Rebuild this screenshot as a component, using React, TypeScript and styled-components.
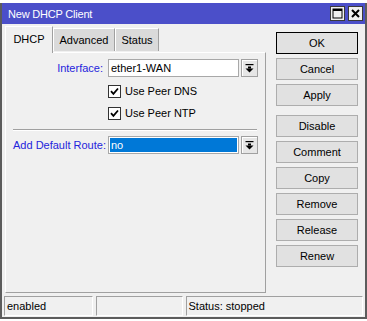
import React from "react";
import styled, { createGlobalStyle } from "styled-components";

const Global = createGlobalStyle`
  html, body { margin: 0; padding: 0; background: #ffffff; }
  body { font-family: "Liberation Sans", Arial, sans-serif; font-size: 11px; color: #000; }
`;

const Desktop = styled.div`
  width: 367px;
  height: 321px;
  box-sizing: border-box;
  padding-top: 3px;
  background: #ffffff;
  overflow: hidden;
`;

const Window = styled.div`
  width: 367px;
  height: 316px;
  box-sizing: border-box;
  border: 2px solid #5c5c5c;
  border-top: none;
  background: #f0f0f0;
  display: flex;
  flex-direction: column;
`;

const TitleBar = styled.div`
  height: 21px;
  flex: none;
  background: #4b4fc9;
  color: #ffffff;
  display: flex;
  align-items: center;
  padding: 0 2px 0 6px;
  font-size: 11px;
  letter-spacing: -0.2px;
`;

const TitleText = styled.div`
  flex: 1;
`;

const TitleButtons = styled.div`
  display: flex;
  gap: 3px;
`;

const TitleButton = styled.div`
  width: 15px;
  height: 15px;
  box-sizing: border-box;
  border: 1px solid #3a3a3a;
  background: #f0f0f0;
  display: flex;
  align-items: center;
  justify-content: center;
`;

const Body = styled.div`
  flex: 1;
  display: flex;
  padding: 2px 0 0 3px;
  min-height: 0;
`;

const MainCol = styled.div`
  width: 261px;
  display: flex;
  flex-direction: column;
`;

const TabRow = styled.div`
  height: 27px;
  display: flex;
  align-items: flex-start;
  position: relative;
  z-index: 1;
`;

const Tab = styled.div<{ $active?: boolean; $w: number }>`
  width: ${(p) => p.$w}px;
  height: ${(p) => (p.$active ? 27 : 23)}px;
  margin-top: ${(p) => (p.$active ? 0 : 2)}px;
  box-sizing: border-box;
  background: ${(p) => (p.$active ? "#f0f0f0" : "#dadada")};
  border-top: 1px solid #ffffff;
  border-left: 1px solid #ffffff;
  border-right: 1px solid #a0a0a0;
  display: flex;
  align-items: center;
  justify-content: center;
  padding-bottom: ${(p) => (p.$active ? 2 : 0)}px;
`;

const Panel = styled.div`
  height: 241px;
  margin-top: -1px;
  box-sizing: border-box;
  border: 1px solid;
  border-color: #ffffff #a0a0a0 #a0a0a0 #ffffff;
  padding: 6px 0 0 7px;
  display: flex;
  flex-direction: column;
`;

const FieldRow = styled.div<{ $top?: number }>`
  display: flex;
  align-items: center;
  height: 18px;
  margin-top: ${(p) => p.$top ?? 0}px;
`;

const Label = styled.div`
  width: 90px;
  text-align: right;
  color: #2424dc;
  padding-right: 5px;
  white-space: nowrap;
`;

const Input = styled.div<{ $selected?: boolean }>`
  width: 131px;
  height: 18px;
  box-sizing: border-box;
  border: 1px solid #a8a8a8;
  background: #ffffff;
  padding: 1px;
  display: flex;
`;

const InputInner = styled.div<{ $selected?: boolean }>`
  flex: 1;
  background: ${(p) => (p.$selected ? "#0078d7" : "#ffffff")};
  color: ${(p) => (p.$selected ? "#ffffff" : "#000000")};
  display: flex;
  align-items: center;
  padding-left: 1px;
`;

const DropButton = styled.div`
  width: 17px;
  height: 18px;
  margin-left: 2px;
  box-sizing: border-box;
  border: 1px solid #a0a0a0;
  box-shadow: inset 1px 1px 0 #ffffff;
  background: #e6e6e6;
  display: flex;
  align-items: center;
  justify-content: center;
`;

const CheckRow = styled.div<{ $top?: number }>`
  display: flex;
  align-items: center;
  height: 22px;
  margin-top: ${(p) => p.$top ?? 0}px;
  padding-left: 95px;
  gap: 4px;
`;

const Box = styled.div`
  width: 13px;
  height: 13px;
  box-sizing: border-box;
  border: 1px solid #333333;
  background: #ffffff;
  display: flex;
  align-items: center;
  justify-content: center;
`;

const Separator = styled.div`
  width: 244px;
  height: 1px;
  margin-top: 5px;
  background: #a0a0a0;
  box-shadow: 0 1px 0 #ffffff;
`;

const ButtonCol = styled.div`
  width: 82px;
  margin-left: 10px;
  padding-top: 6px;
  display: flex;
  flex-direction: column;
  gap: 4px;
`;

const Button = styled.div<{ $default?: boolean; $spaced?: boolean }>`
  height: 22px;
  box-sizing: border-box;
  border: 1px solid ${(p) => (p.$default ? "#000000" : "#adadad")};
  background: #e1e1e1;
  display: flex;
  align-items: center;
  justify-content: center;
  margin-top: ${(p) => (p.$spaced ? 5 : 0)}px;
`;

const StatusBar = styled.div`
  height: 20px;
  flex: none;
  margin: 3px 2px 1px 2px;
  display: flex;
  gap: 3px;
`;

const StatusCell = styled.div<{ $w: number }>`
  width: ${(p) => p.$w}px;
  box-sizing: border-box;
  border: 1px solid;
  border-color: #a0a0a0 #ffffff #ffffff #a0a0a0;
  display: flex;
  align-items: center;
  padding-left: 2px;
`;

const Arrow = () => (
  <svg width="9" height="9" viewBox="0 0 9 9">
    <rect x="0.5" y="0" width="8" height="1.2" fill="#000" />
    <rect x="3" y="2.5" width="3" height="2" fill="#000" />
    <polygon points="0.5,4.5 8.5,4.5 4.5,8.5" fill="#000" />
  </svg>
);

const Check = () => (
  <svg width="9" height="9" viewBox="0 0 9 9">
    <path d="M1 4.2 L3.4 6.8 L8 1.5" stroke="#000" strokeWidth="1.8" fill="none" />
  </svg>
);

const buttons = ["OK", "Cancel", "Apply", "Disable", "Comment", "Copy", "Remove", "Release", "Renew"];

export default function App() {
  return (
    <>
      <Global />
      <Desktop>
        <Window>
          <TitleBar>
            <TitleText>New DHCP Client</TitleText>
            <TitleButtons>
              <TitleButton>
                <svg width="11" height="11" viewBox="0 0 11 11">
                  <rect x="1" y="1" width="9" height="9" fill="none" stroke="#000" strokeWidth="1" />
                  <rect x="1" y="1" width="9" height="2" fill="#000" />
                </svg>
              </TitleButton>
              <TitleButton>
                <svg width="9" height="9" viewBox="0 0 9 9">
                  <path d="M1 1 L8 8 M8 1 L1 8" stroke="#000" strokeWidth="2" />
                </svg>
              </TitleButton>
            </TitleButtons>
          </TitleBar>
          <Body>
            <MainCol>
              <TabRow>
                <Tab $active $w={48}>DHCP</Tab>
                <Tab $w={62}>Advanced</Tab>
                <Tab $w={44}>Status</Tab>
              </TabRow>
              <Panel>
                <FieldRow>
                  <Label>Interface:</Label>
                  <Input>
                    <InputInner>ether1-WAN</InputInner>
                  </Input>
                  <DropButton>
                    <Arrow />
                  </DropButton>
                </FieldRow>
                <CheckRow $top={3}>
                  <Box>
                    <Check />
                  </Box>
                  Use Peer DNS
                </CheckRow>
                <CheckRow>
                  <Box>
                    <Check />
                  </Box>
                  Use Peer NTP
                </CheckRow>
                <Separator />
                <FieldRow $top={6}>
                  <Label>Add Default Route:</Label>
                  <Input>
                    <InputInner $selected>no</InputInner>
                  </Input>
                  <DropButton>
                    <Arrow />
                  </DropButton>
                </FieldRow>
              </Panel>
            </MainCol>
            <ButtonCol>
              {buttons.map((b) => (
                <Button key={b} $default={b === "OK"} $spaced={b === "Disable"}>
                  {b}
                </Button>
              ))}
            </ButtonCol>
          </Body>
          <StatusBar>
            <StatusCell $w={89}>enabled</StatusCell>
            <StatusCell $w={87}></StatusCell>
            <StatusCell $w={178}>Status: stopped</StatusCell>
          </StatusBar>
        </Window>
      </Desktop>
    </>
  );
}
